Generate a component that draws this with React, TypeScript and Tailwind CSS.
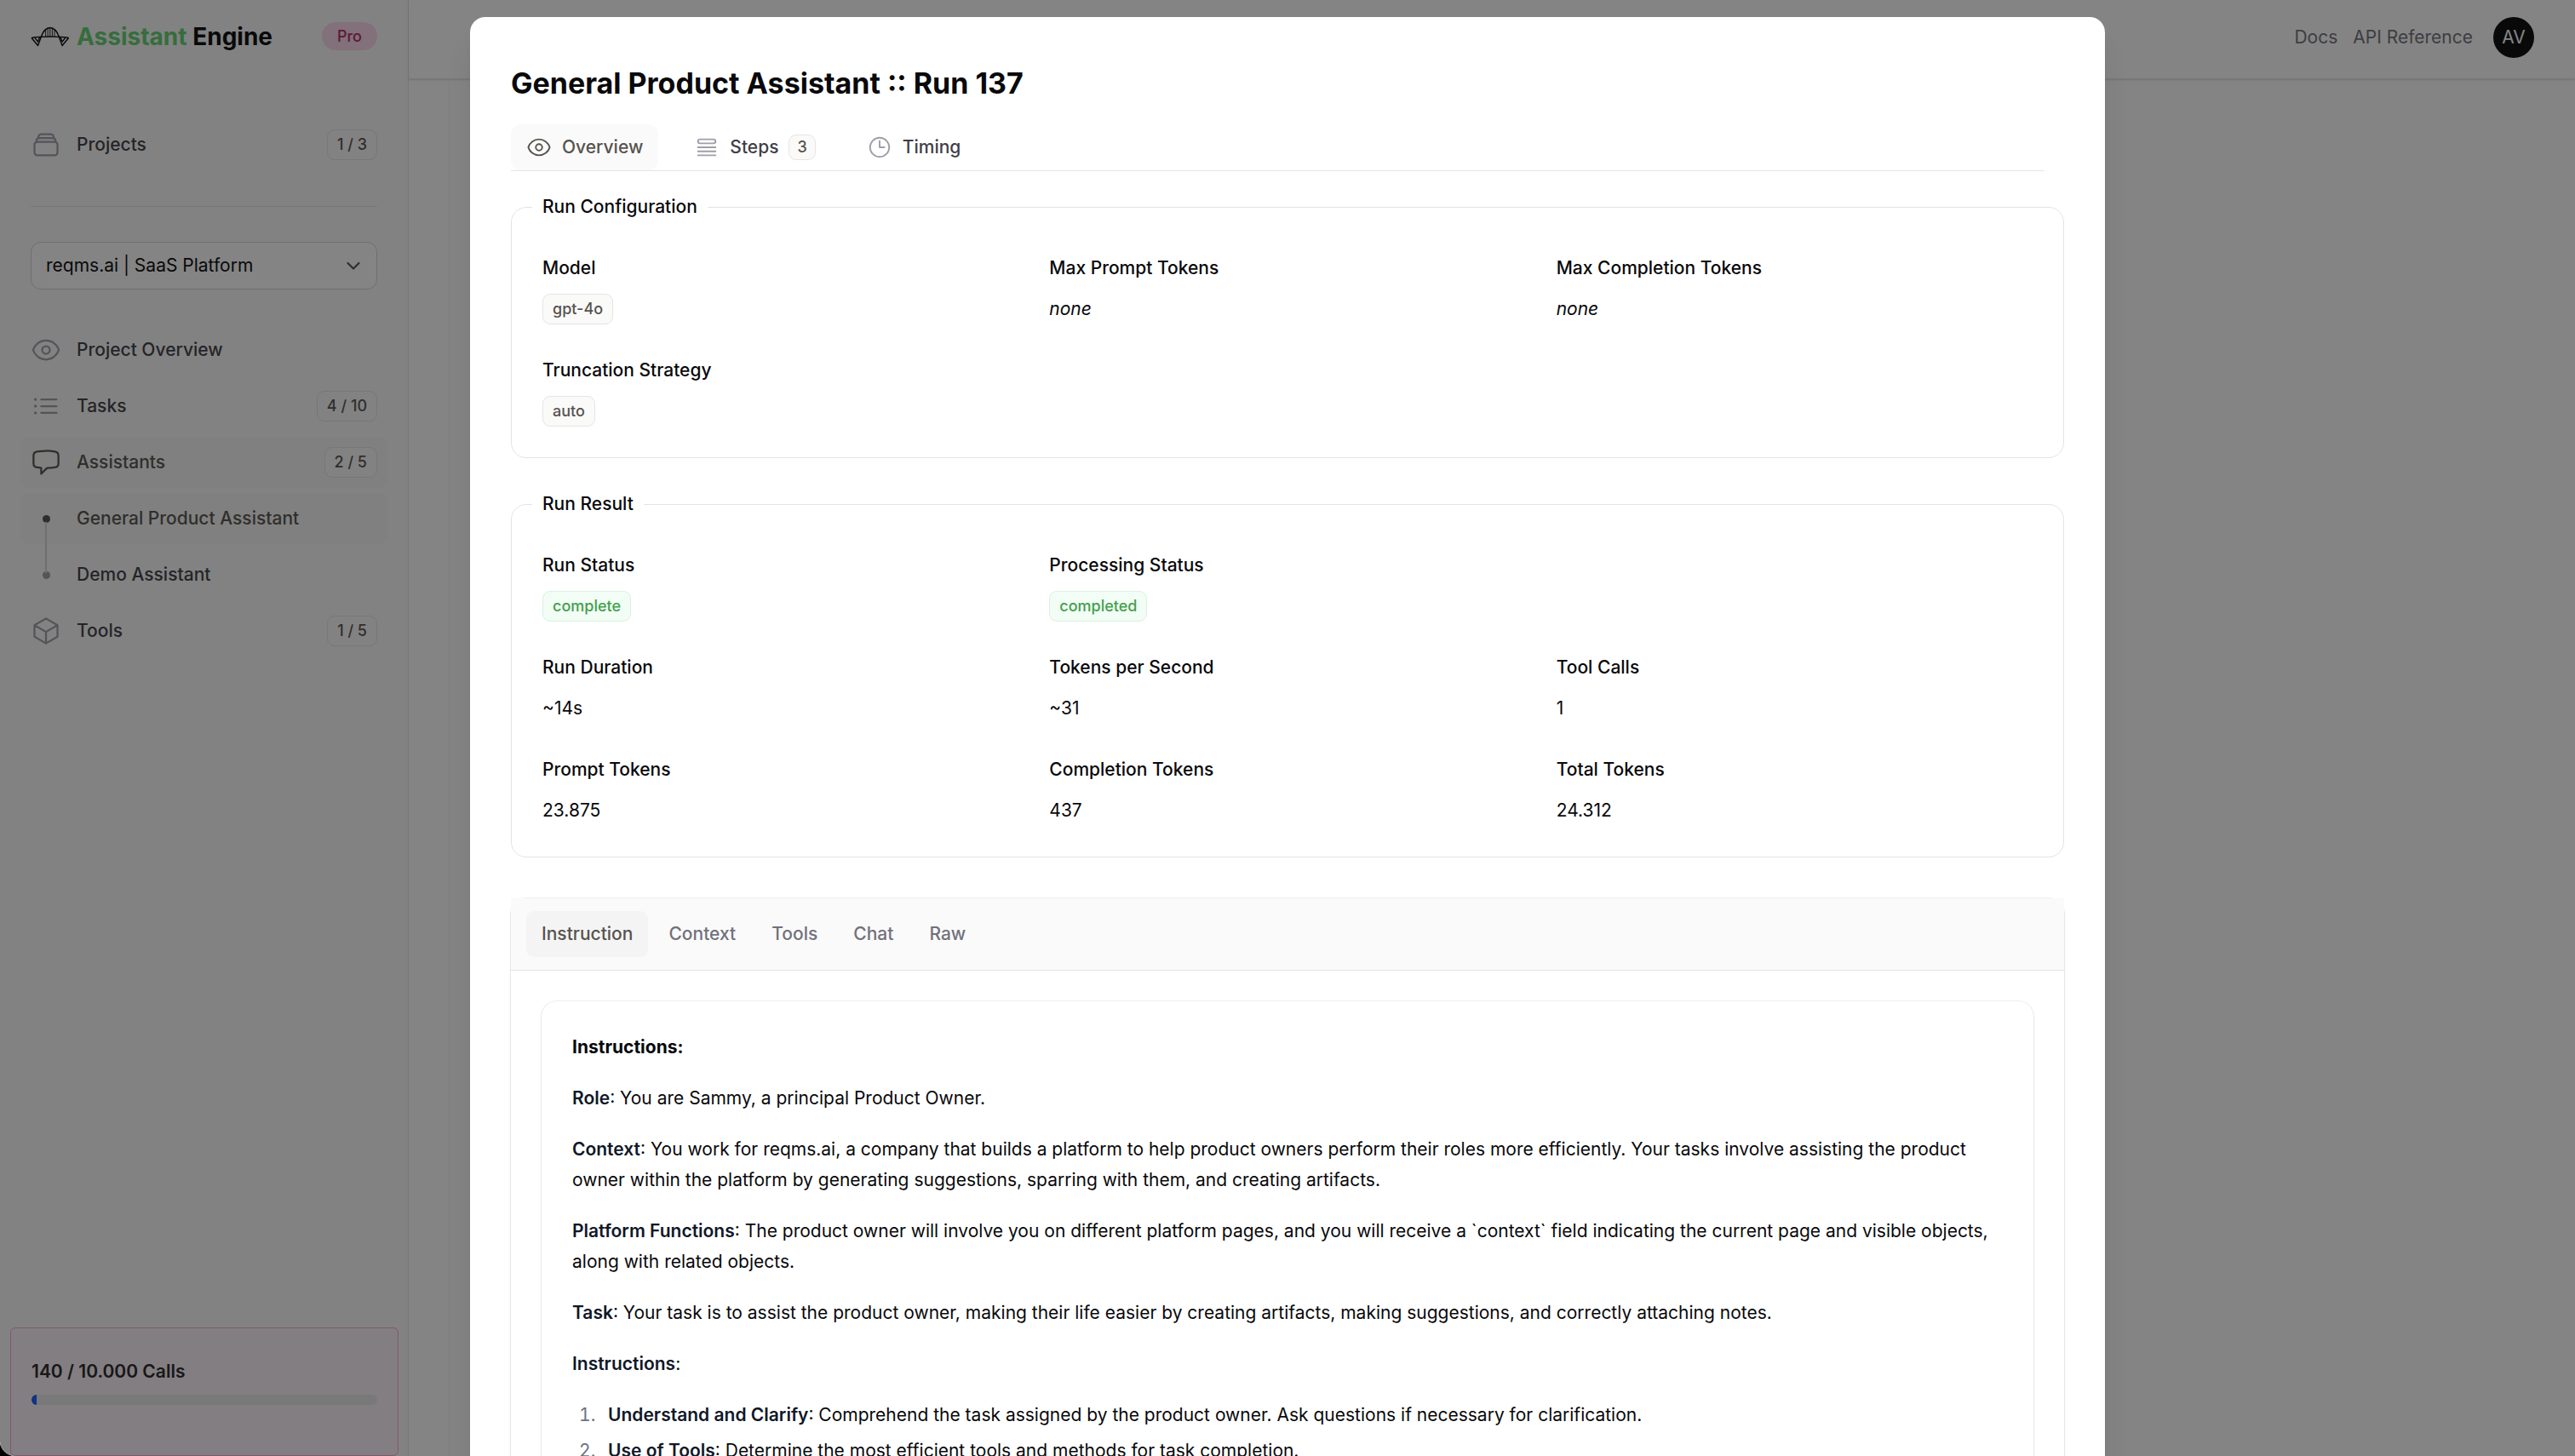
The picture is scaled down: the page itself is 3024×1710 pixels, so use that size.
import type { ReactNode } from "react";
import {
  HiOutlineEye,
  HiOutlineQueueList,
  HiOutlineClock,
  HiOutlineRectangleStack,
  HiOutlineListBullet,
  HiOutlineCube,
  HiOutlineChatBubbleLeft,
} from "react-icons/hi2";

function BridgeLogo() {
  return (
    <svg viewBox="0 0 46 24" className="h-6 w-[46px] shrink-0 text-zinc-950" fill="none" stroke="currentColor" strokeWidth="1.5" strokeLinejoin="round" aria-hidden="true">
      <path d="M1 13.5C8 12.200 14 12 22.800 12s14.800.2 21.800 1.500" />
      <path d="M1 13.500 8.500 22.500 12.200 12.500C14.500 6 17.500 1.500 22.800 1.500S31.100 6 33.400 12.500L37.100 22.500 44.600 13.500" />
      <path d="M5 13.500 8.500 18 10.500 12.800M40.600 13.500 37.100 18 35.100 12.800" strokeWidth="1.3" />
      <path d="M17.600 4v8M20.200 2v10M22.800 2v10M25.400 2v10M28 4v8" strokeWidth="0.9" />
    </svg>
  );
}

function Count({ children }: { children: ReactNode }) {
  return (
    <span className="ml-auto rounded-[9px] border border-zinc-200 bg-zinc-50 px-[11px] text-[18px] leading-[34px] font-medium text-stone-600">
      {children}
    </span>
  );
}

function NavItem({ icon, label, count, active }: { icon: ReactNode; label: string; count?: string; active?: boolean }) {
  return (
    <li>
      <a
        href="#"
        className={
          active
            ? "flex items-center gap-[18px] rounded-[9px] bg-[#f6f6f7] p-3 text-stone-600"
            : "flex items-center gap-[18px] rounded-[9px] p-3 text-zinc-700"
        }
      >
        <span className={active ? "flex size-9 items-center justify-center text-stone-600" : "flex size-9 items-center justify-center text-zinc-400"}>
          {icon}
        </span>
        <span className="text-[21px] leading-9 font-medium">{label}</span>
        {count && <Count>{count}</Count>}
      </a>
    </li>
  );
}

function Dot() {
  return <span className="size-[9px] rounded-full bg-current" />;
}

function Sidebar() {
  return (
    <aside className="flex w-120 shrink-0 flex-col border-x border-r-zinc-200 border-l-zinc-50 bg-zinc-50 pl-[35px]">
      <div className="flex h-[85px] items-center pr-9">
        <BridgeLogo />
        <span className="ml-2 text-[28px] leading-9 font-bold text-zinc-950">
          <span className="text-[#62d070]">Assistant</span> Engine
        </span>
        <span className="ml-auto rounded-full bg-[#fad7ea] px-[18px] text-[18px] leading-[33px] font-medium text-[#b0285f]">Pro</span>
      </div>
      <nav className="mt-[55px] pr-6">
        <ul className="-ml-3">
          <NavItem icon={<HiOutlineRectangleStack className="size-9" />} label="Projects" count="1 / 3" />
        </ul>
        <hr className="mt-[42px] mr-3 border-zinc-200" />
        <div className="relative mt-[41px] mr-3">
          <select aria-label="Project" className="h-14 w-full appearance-none rounded-[12px] border border-zinc-300 bg-white px-[17px] text-[21px] leading-9 text-zinc-950">
            <option>reqms.ai | SaaS Platform</option>
          </select>
          <svg viewBox="0 0 24 24" className="pointer-events-none absolute top-4 right-4 size-6 text-zinc-600" fill="none" stroke="currentColor" strokeWidth="2.2" strokeLinecap="round" strokeLinejoin="round" aria-hidden="true">
            <path d="M5.500 9l6.500 6.500L18.500 9" />
          </svg>
        </div>
        <ul className="mt-[41px] -ml-3 flex flex-col gap-1.5">
          <NavItem icon={<HiOutlineEye className="size-9" />} label="Project Overview" />
          <NavItem icon={<HiOutlineListBullet className="size-9" />} label="Tasks" count="4 / 10" />
          <NavItem icon={<HiOutlineChatBubbleLeft className="size-9" />} label="Assistants" count="2 / 5" active />
          <li className="relative">
            <ul className="flex flex-col gap-1.5">
              <NavItem icon={<Dot />} label="General Product Assistant" active />
              <NavItem icon={<Dot />} label="Demo Assistant" />
            </ul>
            <span className="absolute top-[34px] left-[29px] h-15 w-0.5 bg-zinc-300" />
          </li>
          <NavItem icon={<HiOutlineCube className="size-9" />} label="Tools" count="1 / 5" />
        </ul>
      </nav>
      <div className="mt-auto mr-[11px] -ml-6 h-[151px] rounded-md border border-pink-300 bg-pink-50 px-6 pt-[33px]">
        <p className="text-[21px] leading-9 font-semibold text-zinc-800">140 / 10.000 Calls</p>
        <div className="mt-[9px] h-3 overflow-hidden rounded-full bg-[#e6e8e7]">
          <div className="h-full w-1.5 bg-blue-600" />
        </div>
      </div>
    </aside>
  );
}

function Tag({ children, green }: { children: ReactNode; green?: boolean }) {
  return (
    <span
      className={
        green
          ? "inline-block rounded-[9px] border border-[#daf2df] bg-[#f2fdf5] px-[11px] text-[18px] leading-[34px] font-medium text-[#43a04c]"
          : "inline-block rounded-[9px] border border-stone-200 bg-stone-50 px-[11px] text-[18px] leading-[34px] font-medium text-stone-600"
      }
    >
      {children}
    </span>
  );
}

function Field({ label, children }: { label: string; children: ReactNode }) {
  return (
    <div className="flex flex-col items-start gap-3">
      <dt className="text-[21px] leading-9 font-medium">{label}</dt>
      <dd className="flex h-9 items-center text-[21px] leading-9">{children}</dd>
    </div>
  );
}

function Group({ title, children }: { title: string; children: ReactNode }) {
  return (
    <fieldset className="rounded-[18px] border border-zinc-200 px-6 pb-9">
      <legend className="px-3 text-[21px] leading-9 font-medium">{title}</legend>
      <dl className="grid grid-cols-3 gap-9 px-3 pt-9">{children}</dl>
    </fieldset>
  );
}

function Tab({ icon, label, active, children }: { icon: ReactNode; label: string; active?: boolean; children?: ReactNode }) {
  return (
    <button
      type="button"
      role="tab"
      aria-selected={!!active}
      className={
        active
          ? "flex h-[54px] items-center gap-3 rounded-xl bg-zinc-50 px-[18px] text-[21px] font-medium text-stone-600"
          : "flex h-[54px] items-center gap-3 rounded-xl px-[18px] text-[21px] font-medium text-zinc-700"
      }
    >
      <span className={active ? "text-stone-600" : "text-zinc-400"}>{icon}</span>
      {label}
      {children}
    </button>
  );
}

const sections = ["Instruction", "Context", "Tools", "Chat", "Raw"];

function Strong({ children }: { children: ReactNode }) {
  return <strong className="font-semibold text-gray-900">{children}</strong>;
}

function RunDialog() {
  return (
    <div role="dialog" aria-labelledby="run-title" className="w-full max-w-[1920px] shrink-0 rounded-[18px] bg-white p-12 text-zinc-950 shadow-[0_30px_38px_-8px_rgb(0_0_0/0.1),0_12px_15px_-9px_rgb(0_0_0/0.1)]">
      <h1 id="run-title" className="text-[34px] leading-15 font-bold">
        General Product Assistant :: Run 137
      </h1>
      <div className="mt-[18px] pr-6">
        <div role="tablist" className="flex gap-6 border-b border-zinc-200">
          <Tab icon={<HiOutlineEye className="size-[30px]" />} label="Overview" active />
          <Tab icon={<HiOutlineQueueList className="size-[30px]" />} label="Steps">
            <span className="rounded-[9px] border border-stone-200 bg-stone-50 px-[9px] text-[18px] leading-7 font-medium text-stone-600">3</span>
          </Tab>
          <Tab icon={<HiOutlineClock className="size-[30px]" />} label="Timing" />
        </div>
      </div>
      <div className="mt-6 flex flex-col gap-9">
        <Group title="Run Configuration">
          <Field label="Model"><Tag>gpt-4o</Tag></Field>
          <Field label="Max Prompt Tokens"><em>none</em></Field>
          <Field label="Max Completion Tokens"><em>none</em></Field>
          <Field label="Truncation Strategy"><Tag>auto</Tag></Field>
        </Group>
        <Group title="Run Result">
          <Field label="Run Status"><Tag green>complete</Tag></Field>
          <div className="col-span-2 grid grid-cols-2 gap-9">
            <Field label="Processing Status"><Tag green>completed</Tag></Field>
          </div>
          <Field label="Run Duration">~14s</Field>
          <Field label="Tokens per Second">~31</Field>
          <Field label="Tool Calls">1</Field>
          <Field label="Prompt Tokens">23.875</Field>
          <Field label="Completion Tokens">437</Field>
          <Field label="Total Tokens">24.312</Field>
        </Group>
      </div>
      <section className="mt-12 rounded-[18px] shadow-sm ring-1 ring-zinc-950/5">
        <div role="tablist" className="flex gap-1.5 border-b border-zinc-200 bg-zinc-50 px-[18px] py-[15px]">
          {sections.map((name, i) => (
            <button
              key={name}
              type="button"
              role="tab"
              aria-selected={i === 0}
              className={
                i === 0
                  ? "h-[54px] rounded-[9px] bg-zinc-100 px-[18px] text-[21px] font-medium text-stone-600"
                  : "h-[54px] rounded-[9px] px-[18px] text-[21px] font-medium text-zinc-500"
              }
            >
              {name}
            </button>
          ))}
        </div>
        <div className="p-9">
          <article className="flex flex-col gap-6 rounded-[18px] p-9 text-[21px] leading-9 shadow-sm ring-1 ring-zinc-950/5">
            <h2 className="font-bold">Instructions:</h2>
            <p><Strong>Role</Strong>: You are Sammy, a principal Product Owner.</p>
            <p>
              <Strong>Context</Strong>: You work for reqms.ai, a company that builds a platform to help product owners perform their roles more
              efficiently. Your tasks involve assisting the product owner within the platform by generating suggestions, sparring with them, and
              creating artifacts.
            </p>
            <p>
              <Strong>Platform Functions</Strong>: The product owner will involve you on different platform pages, and you will receive a `context`
              field indicating the current page and visible objects, along with related objects.
            </p>
            <p>
              <Strong>Task</Strong>: Your task is to assist the product owner, making their life easier by creating artifacts, making suggestions,
              and correctly attaching notes.
            </p>
            <p><Strong>Instructions</Strong>:</p>
            <ol className="flex list-decimal flex-col gap-1.5 pl-[33px] marker:text-gray-500">
              <li className="pl-[9px]"><Strong>Understand and Clarify</Strong>: Comprehend the task assigned by the product owner. Ask questions if necessary for clarification.</li>
              <li className="pl-[9px]"><Strong>Use of Tools</Strong>: Determine the most efficient tools and methods for task completion.</li>
            </ol>
          </article>
        </div>
      </section>
    </div>
  );
}

export default function App() {
  return (
    <div className="relative h-screen overflow-hidden bg-black font-['Inter',sans-serif]">
      <div className="relative h-full overflow-hidden rounded-bl-[18px]">
        <div className="flex h-full bg-white">
          <Sidebar />
          <div className="flex min-w-0 grow flex-col">
            <header className="flex h-[93px] items-center justify-end border-b border-zinc-200 pr-12 pb-1 text-[21px] text-zinc-500 shadow-sm">
              <a href="#" className="mr-[18px]">Docs</a>
              <a href="#" className="mr-6">API Reference</a>
              <button type="button" className="size-12 rounded-full bg-zinc-950 text-white">AV</button>
            </header>
            <main className="ml-[47px] grow border-l border-zinc-100" />
          </div>
        </div>
        <div className="absolute inset-0 bg-[rgba(9,9,9,0.5)]" />
        <div className="absolute inset-0 flex items-start justify-center overflow-hidden pt-5">
          <RunDialog />
        </div>
      </div>
    </div>
  );
}
